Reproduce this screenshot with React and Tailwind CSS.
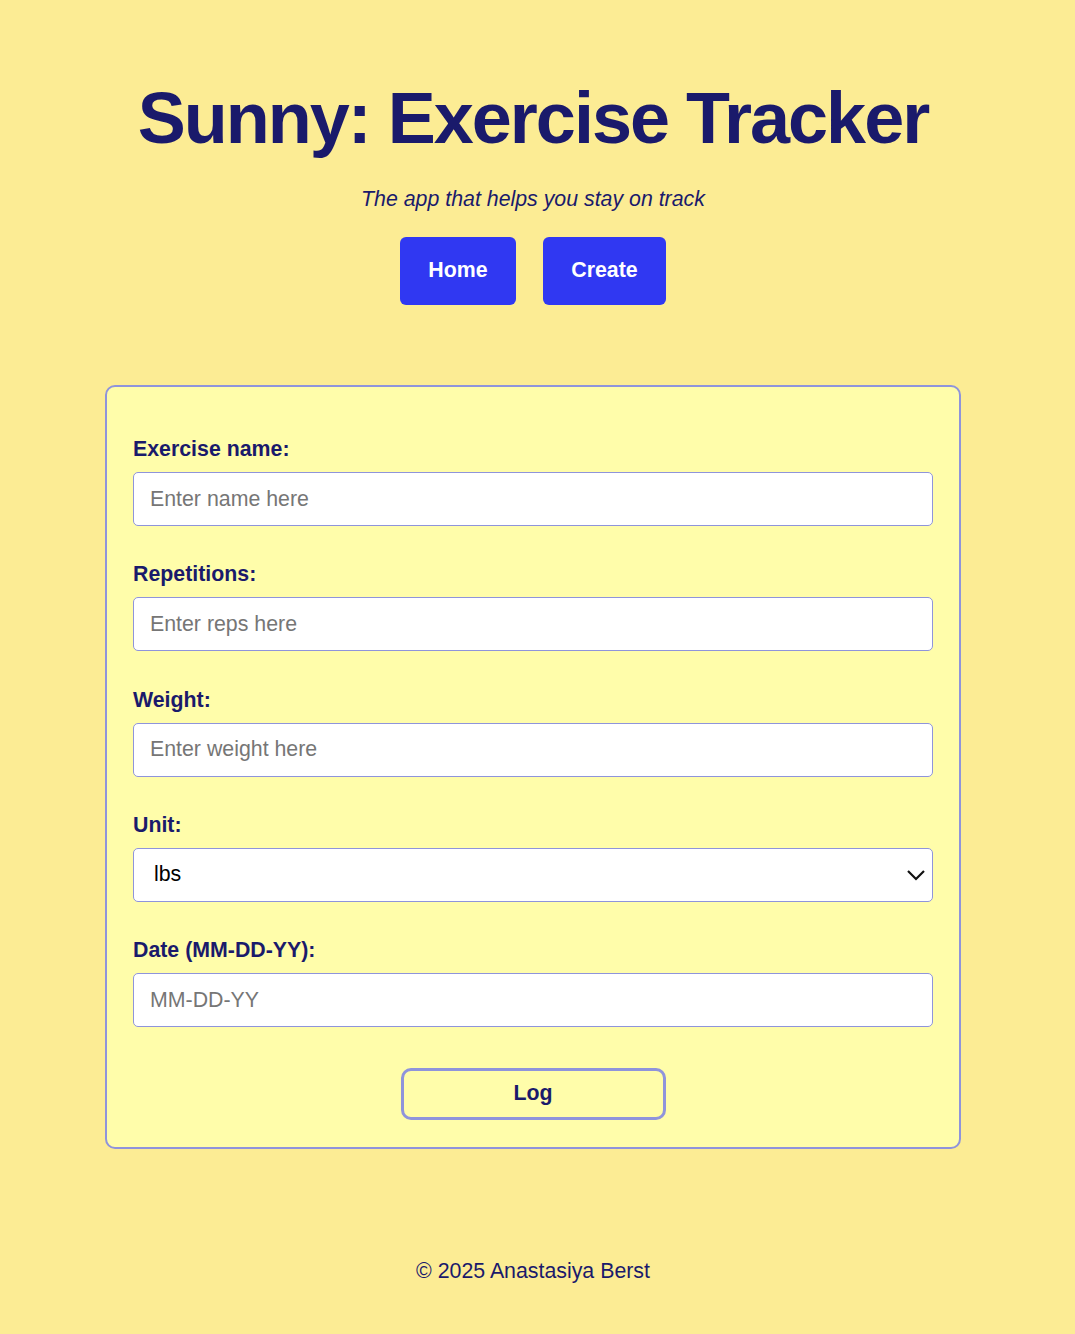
import React, { useState } from 'react';

const fields = [
  { id: 'name', label: 'Exercise name:', placeholder: 'Enter name here' },
  { id: 'reps', label: 'Repetitions:', placeholder: 'Enter reps here' },
  { id: 'weight', label: 'Weight:', placeholder: 'Enter weight here' },
];

const App = () => {
  const [formData, setFormData] = useState({ name: '', reps: '', weight: '', unit: 'lbs', date: '' });

  const inputClass =
    'w-full h-[54px] rounded-[5px] border border-[#8f94db] bg-white px-4 text-[21.33px] text-black placeholder:text-[#767676] outline-none';

  return (
    <div className="min-h-screen bg-[#fcec94] text-[#1a1a6b] font-['Liberation_Sans',Arial,sans-serif] flex flex-col items-center pr-[9px]">
      <header className="flex flex-col items-center pt-[80px]">
        <h1 className="text-[72px] leading-[76px] font-bold tracking-[-2px]">Sunny: Exercise Tracker</h1>
        <p className="mt-[31px] text-[21.33px] italic leading-6">The app that helps you stay on track</p>
        <nav className="mt-[26px] flex gap-[27px]">
          <button className="h-[68px] w-[116px] rounded-[6px] bg-[#3038f2] text-[21.33px] font-bold text-white">Home</button>
          <button className="h-[68px] w-[123px] rounded-[6px] bg-[#3038f2] text-[21.33px] font-bold text-white">Create</button>
        </nav>
      </header>

      <form
        onSubmit={(e) => e.preventDefault()}
        className="mt-[80px] w-[856px] rounded-[10px] border-2 border-[#8f94db] bg-[#fffdaa] px-[26px] pt-[50px] pb-[27px] flex flex-col gap-[36.3px]"
      >
        {fields.map((f) => (
          <div key={f.id} className="flex flex-col gap-[11px]">
            <label htmlFor={f.id} className="text-[21.33px] font-bold leading-6">{f.label}</label>
            <input
              id={f.id}
              type="text"
              placeholder={f.placeholder}
              value={formData[f.id]}
              onChange={(e) => setFormData({ ...formData, [f.id]: e.target.value })}
              className={inputClass}
            />
          </div>
        ))}

        <div className="flex flex-col gap-[11px]">
          <label htmlFor="unit" className="text-[21.33px] font-bold leading-6">Unit:</label>
          <div className="relative">
            <select
              id="unit"
              value={formData.unit}
              onChange={(e) => setFormData({ ...formData, unit: e.target.value })}
              className="w-full h-[54px] appearance-none rounded-[5px] border border-[#8f94db] bg-white pl-[20px] text-[21.33px] text-black outline-none"
            >
              <option value="lbs">lbs</option>
              <option value="kgs">kgs</option>
            </select>
            <svg className="pointer-events-none absolute right-[6px] top-1/2 -translate-y-1/2" width="22" height="20" viewBox="0 0 22 20" fill="none">
              <path d="M3 6l8 8 8-8" stroke="#111" strokeWidth="2.2" />
            </svg>
          </div>
        </div>

        <div className="flex flex-col gap-[11px]">
          <label htmlFor="date" className="text-[21.33px] font-bold leading-6">Date (MM-DD-YY):</label>
          <input
            id="date"
            type="text"
            placeholder="MM-DD-YY"
            value={formData.date}
            onChange={(e) => setFormData({ ...formData, date: e.target.value })}
            className={inputClass}
          />
        </div>

        <div className="flex justify-center mt-[5px]">
          <button type="submit" className="h-[52px] w-[265px] rounded-[10px] border-[3px] border-[#8f94db] text-[21.33px] font-bold">
            Log
          </button>
        </div>
      </form>

      <footer className="mt-[110px] text-[21.33px] leading-6">© 2025 Anastasiya Berst</footer>
    </div>
  );
};

export default App;
